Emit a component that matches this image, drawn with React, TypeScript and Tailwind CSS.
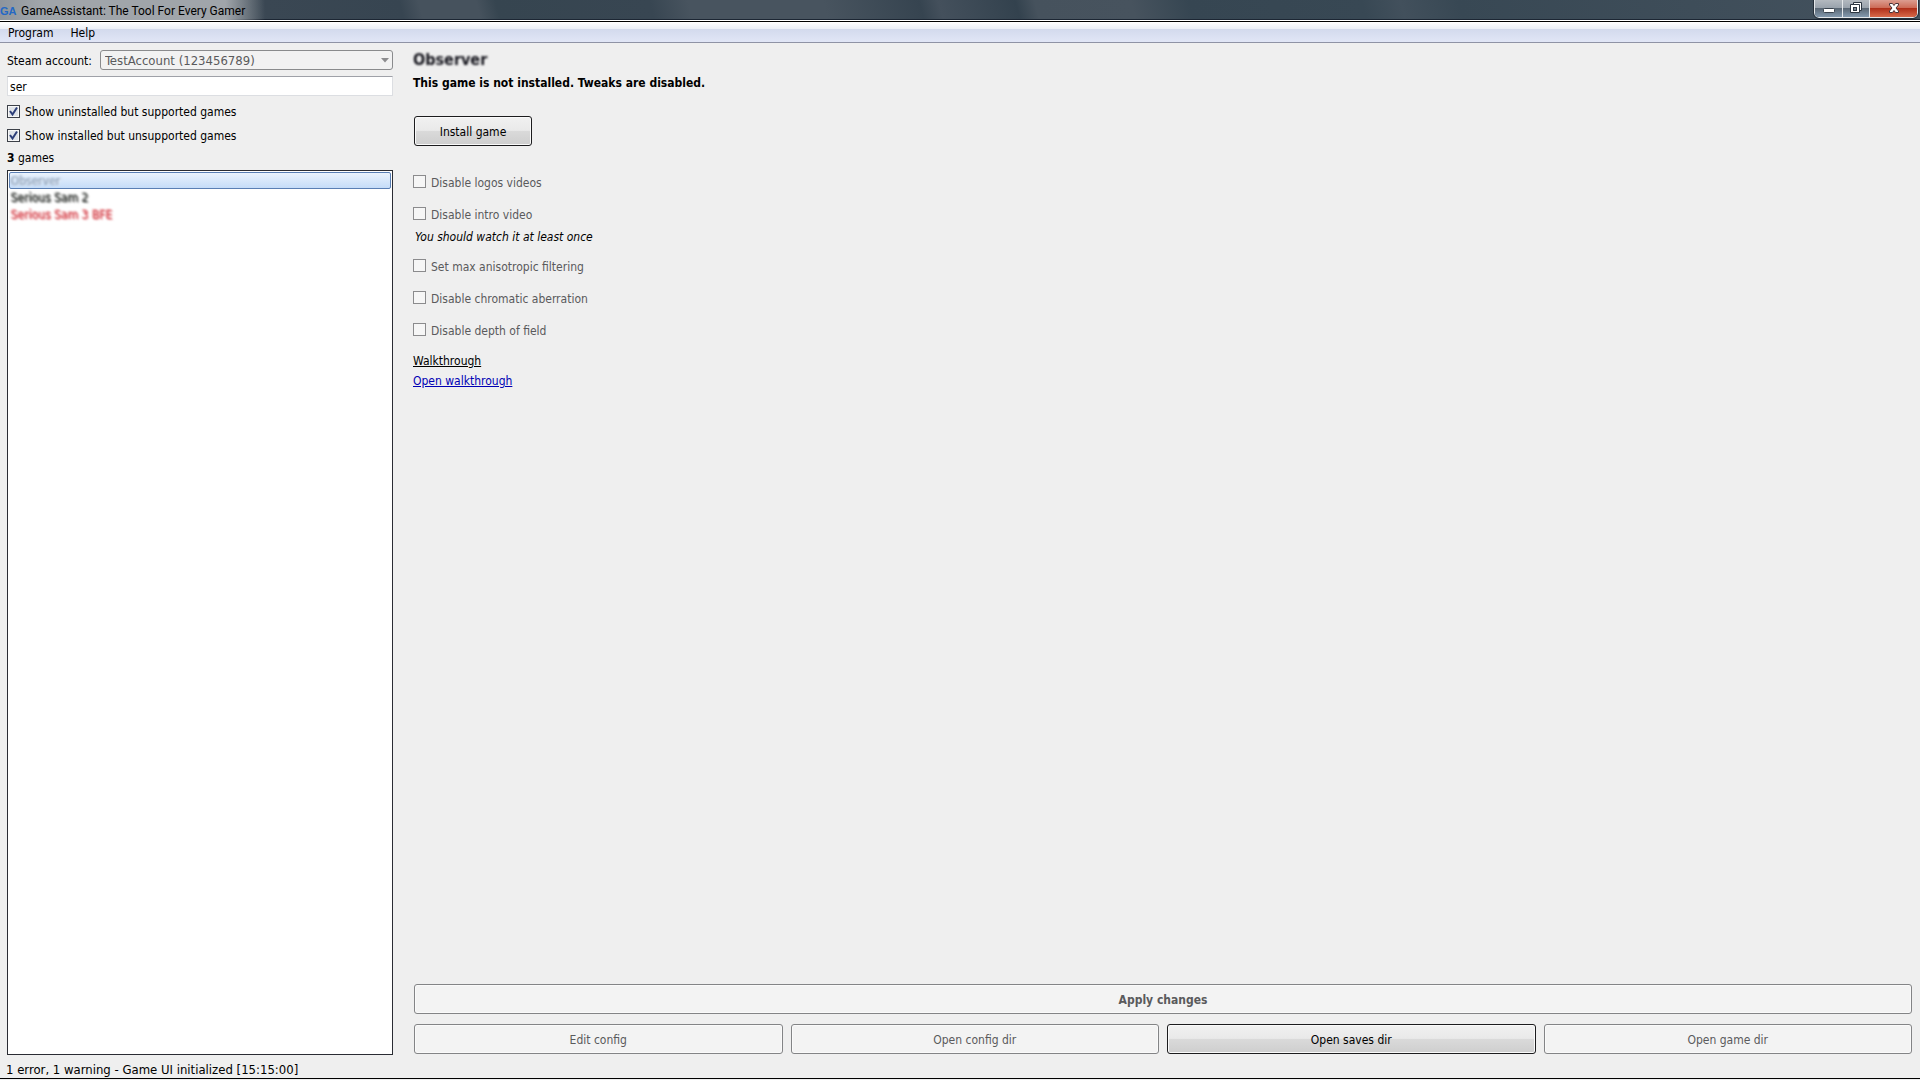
import React, { useState } from "react";

interface Game {
  id: number;
  name: string;
  className: string;
}

interface TweakProps {
  label: string;
  hint?: string;
}

interface ActionButtonProps {
  label: string;
  disabled?: boolean;
  className?: string;
}

interface FilterProps {
  label: string;
  checked: boolean;
  onChange: (checked: boolean) => void;
}

const games: Game[] = [
  { id: 1, name: "Observer", className: "text-[#93a5bb] [text-shadow:1px_1px_0_#dfe8f2,-1px_0_0_#b4c3d6]" },
  { id: 2, name: "Serious Sam 2", className: "text-[#2c2f2c] [text-shadow:1px_1px_0_#a8aaa8,-1px_-1px_0_#a8aaa8]" },
  { id: 3, name: "Serious Sam 3 BFE", className: "text-[#d4404a] [text-shadow:1px_1px_0_#f0b6b8,-1px_-1px_0_#f0b6b8]" },
];

const tweaks: TweakProps[] = [
  { label: "Disable logos videos" },
  { label: "Disable intro video", hint: "You should watch it at least once" },
  { label: "Set max anisotropic filtering" },
  { label: "Disable chromatic aberration" },
  { label: "Disable depth of field" },
];

const TitleBar: React.FC = () => (
  <header className="flex h-[22px] items-start justify-between border-b border-black bg-[linear-gradient(75deg,#8e959b_0%,#3a4753_14%,#374551_21%,#46525d_22%,#46525d_25%,#364550_26%,#384652_34%,#48545f_36%,#48545f_43%,#364450_48%,#44505c_49%,#33424e_53%,#46525d_54%,#47535e_59%,#364652_62%,#384854_71%,#42505c_73%,#384854_76%,#44525e_100%)] shadow-[inset_0_-1px_0_#fff,inset_0_-2px_0_#1c2633]">
    <div className="flex h-5 items-center bg-[linear-gradient(90deg,#8f959b_0%,#a0a5aa_15%,#a0a5aa_85%,transparent_100%)] pt-0.5 pr-5">
      <span className="w-[21px] font-['Liberation_Sans',sans-serif] text-[11px] font-bold text-[#2468c4]">GA</span>
      <h1 className="font-['Roboto',sans-serif] text-xs text-black">GameAssistant: The Tool For Every Gamer</h1>
    </div>
    <div className="mr-0.5 flex h-[18px] overflow-hidden rounded-b-[5px] border border-t-0 border-[#e4e7ea] outline outline-[#26303a]">
      <button
        type="button"
        aria-label="Minimize"
        className="flex w-[28px] items-center justify-center border-r border-[#e4e7ea] bg-[linear-gradient(#b3b9bf_0%,#9aa3ad_45%,#5b6875_50%,#8399ae_100%)]"
      >
        <svg width="14" height="18" viewBox="0 0 14 18">
          <rect x="1.500" y="8.500" width="11" height="4" rx="1" fill="#fff" stroke="#39434e" />
        </svg>
      </button>
      <button
        type="button"
        aria-label="Restore"
        className="flex w-[27px] items-center justify-center border-r border-[#e4e7ea] bg-[linear-gradient(#b3b9bf_0%,#9aa3ad_45%,#5b6875_50%,#8399ae_100%)]"
      >
        <svg width="14" height="18" viewBox="0 0 14 18">
          <path d="M4.500 2.500h8v8h-2v2h-9v-8h3z" fill="#fff" stroke="#2b3540" />
          <path d="M3.500 4.500h7v7" fill="none" stroke="#2b3540" />
          <rect x="4.500" y="7.500" width="3" height="3" fill="#7b8894" stroke="#2b3540" />
        </svg>
      </button>
      <button
        type="button"
        aria-label="Close"
        className="flex w-[47px] items-center justify-center bg-[linear-gradient(#dc9d90_0%,#cd6c58_45%,#b0301a_50%,#d8694a_100%)]"
      >
        <svg width="14" height="18" viewBox="0 0 14 18">
          <path
            d="M2.500 3.500h3l1.500 2 1.500-2h3v1.500l-2.500 3 2.500 3v1.500h-3l-1.500-2-1.500 2h-3v-1.500l2.500-3-2.500-3z"
            fill="#fff"
            stroke="#4a3338"
          />
        </svg>
      </button>
    </div>
  </header>
);

const MenuBar: React.FC = () => (
  <nav className="flex h-[21px] items-center gap-[17px] border-b border-[#8f93a5] bg-[linear-gradient(#ffffff_0%,#eceff7_33%,#d3daed_36%,#e1e6f6_100%)] px-2 pt-0.5">
    <button type="button">Program</button>
    <button type="button">Help</button>
  </nav>
);

const Filter: React.FC<FilterProps> = ({ label, checked, onChange }) => (
  <label className="flex h-6 items-center gap-[5px]">
    <span className="relative flex">
      <input
        type="checkbox"
        checked={checked}
        onChange={(e) => onChange(e.target.checked)}
        className="size-[13px] appearance-none border border-[#3c4048] bg-[#dfe3e8] shadow-[inset_0_0_0_1px_#f8f8f8]"
      />
      {checked && (
        <svg className="pointer-events-none absolute inset-0" width="13" height="13" viewBox="0 0 13 13">
          <path d="M3 6l2.500 3.500L10 2.500" fill="none" stroke="#2c3e78" strokeWidth="2" />
        </svg>
      )}
    </span>
    <span className="pt-0.5">{label}</span>
  </label>
);

const Tweak: React.FC<TweakProps> = ({ label, hint }) => (
  <li>
    <label className="flex h-5 items-center gap-[5px] text-[#5a5a5c]">
      <input
        type="checkbox"
        disabled
        className="size-[13px] appearance-none border border-[#8b8b8d] bg-[#f6f6f6]"
      />
      <span className="pt-1">{label}</span>
    </label>
    {hint && <p className="pt-2 pl-0.5 leading-3 text-black italic">{hint}</p>}
  </li>
);

const ActionButton: React.FC<ActionButtonProps> = ({ label, disabled = false, className = "" }) => (
  <button
    type="button"
    disabled={disabled}
    className={`h-[30px] rounded-[3px] border pt-0.5 ${
      disabled
        ? "border-[#838486] bg-[#f3f3f3] text-[#5a5a5c] shadow-[inset_0_0_0_1px_#fafafa]"
        : "border-[#1c1c1e] bg-[linear-gradient(#f1f1f1_0%,#e9e9e9_48%,#dadada_50%,#cecece_100%)] text-black shadow-[inset_0_0_0_1px_#fafafa]"
    } ${className}`}
  >
    {label}
  </button>
);

export default function App() {
  const [search, setSearch] = useState("ser");
  const [showUninstalled, setShowUninstalled] = useState(true);
  const [showUnsupported, setShowUnsupported] = useState(true);
  const [selectedId, setSelectedId] = useState(1);

  return (
    <div className="flex min-h-screen flex-col bg-[#efefef] font-['DejaVu_Sans_Condensed','DejaVu_Sans',sans-serif] text-xs text-black">
      <TitleBar />
      <MenuBar />

      <div className="flex flex-1 gap-5 pt-[7px] pr-2 pl-[7px]">
        {/* Games list */}
        <aside className="flex w-[386px] shrink-0 flex-col">
          <div className="flex h-5 items-center gap-2">
            <label htmlFor="account" className="shrink-0 pt-0.5">
              Steam account:
            </label>
            <div className="relative flex-1">
              <select
                id="account"
                disabled
                className="block h-5 w-full appearance-none rounded-[3px] border border-[#8a8b8d] bg-[#f2f2f2] px-1 pt-px text-[13px] leading-4 text-[#5a5a5c] opacity-100"
              >
                <option>TestAccount (123456789)</option>
              </select>
              <svg className="pointer-events-none absolute top-2 right-1" width="8" height="5" viewBox="0 0 8 5">
                <path d="M0 0h8L4 4.500z" fill="#8c8c8e" />
              </svg>
            </div>
          </div>
          <input
            type="text"
            aria-label="Search games"
            value={search}
            onChange={(e) => setSearch(e.target.value)}
            className="mt-1.5 h-5 border border-[#dcdee2] border-t-[#9fa1a8] bg-white px-0.5 pt-0.5 outline-none"
          />
          <div className="mt-[3px]">
            <Filter label="Show uninstalled but supported games" checked={showUninstalled} onChange={setShowUninstalled} />
            <Filter label="Show installed but unsupported games" checked={showUnsupported} onChange={setShowUnsupported} />
          </div>
          <p className="pt-px leading-5">
            <b>{games.length}</b> games
          </p>
          <ul className="mt-0.5 flex-1 border border-[#2a2c33] bg-white p-px">
            {games.map((game) => (
              <li key={game.id}>
                <button
                  type="button"
                  onClick={() => setSelectedId(game.id)}
                  className={`flex h-[17px] w-full items-center border px-px ${
                    selectedId === game.id
                      ? "rounded-[2px] border-[#5a7fb4] bg-[linear-gradient(#eaf3fd,#c5dcf8)]"
                      : "border-transparent"
                  }`}
                >
                  <span className={`blur-[1px] ${game.className}`}>{game.name}</span>
                </button>
              </li>
            ))}
          </ul>
        </aside>

        {/* Selected game */}
        <main className="flex flex-1 flex-col pb-px">
          <h2 className="text-base leading-5 font-bold text-[#14141c] blur-[1px]">Observer</h2>
          <p className="pt-px leading-6 font-bold">This game is not installed. Tweaks are disabled.</p>
          <div className="mt-[21px] pl-px">
            <ActionButton label="Install game" className="w-[118px]" />
          </div>
          <ul className="mt-[25px] flex flex-col gap-3">
            {tweaks.map((tweak) => (
              <Tweak key={tweak.label} {...tweak} />
            ))}
          </ul>
          <div className="mt-3 flex flex-col items-start leading-5">
            <span className="underline">Walkthrough</span>
            <a href="#walkthrough" className="text-[#0000b4] underline">
              Open walkthrough
            </a>
          </div>

          <div className="mt-auto flex flex-col gap-2.5 pl-px">
            <ActionButton label="Apply changes" disabled className="w-full font-bold" />
            <div className="grid grid-cols-4 gap-2">
              <ActionButton label="Edit config" disabled />
              <ActionButton label="Open config dir" disabled />
              <ActionButton label="Open saves dir" />
              <ActionButton label="Open game dir" disabled />
            </div>
          </div>
        </main>
      </div>

      <footer className="mb-px h-6 border-b border-black px-1.5 pt-[7px] text-[13px] leading-4">
        1 error, 1 warning - Game UI initialized [15:15:00]
      </footer>
    </div>
  );
}
